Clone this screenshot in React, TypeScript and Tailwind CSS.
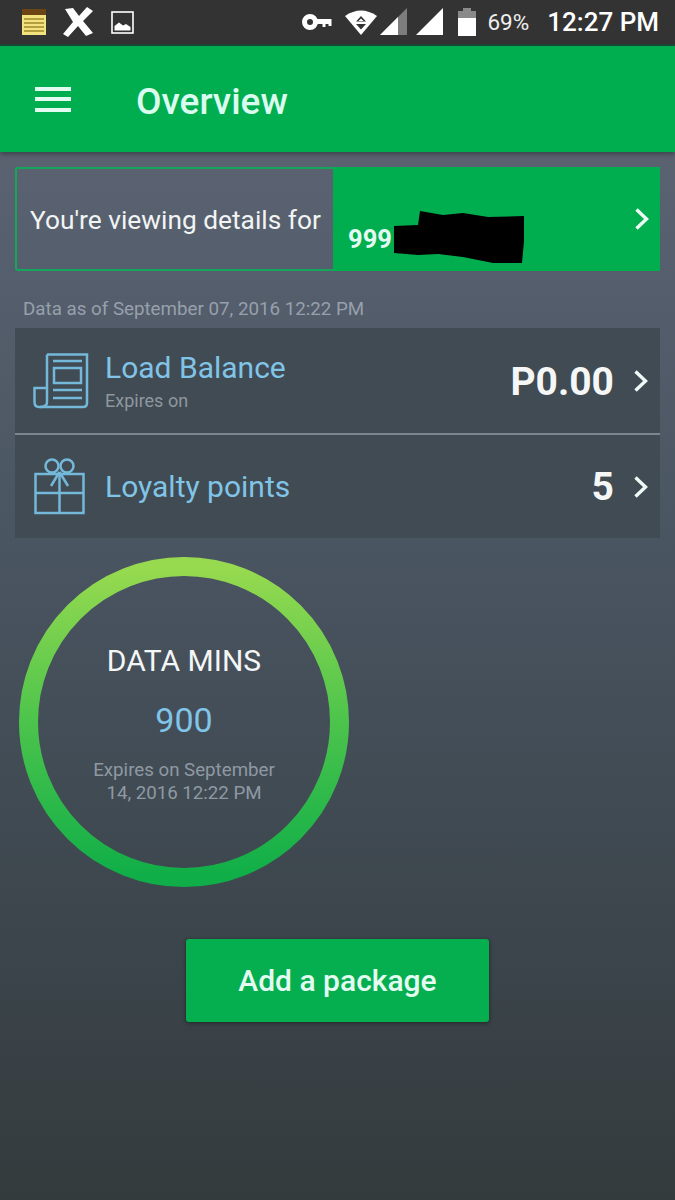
import React from "react";

function Chevron() {
  return (
    <svg width="16" height="24" viewBox="0 0 16 24" className="shrink-0">
      <path d="M2.5 2.5 L12.5 12 L2.5 21.5" fill="none" stroke="#eefaf5" strokeWidth="3.4" />
    </svg>
  );
}

function StatusLeft() {
  return (
    <div className="flex items-center">
      <svg width="26" height="28" viewBox="0 0 26 28" className="ml-[21px]">
        <rect x="1" y="1" width="24" height="26" fill="#f3e27e" />
        <rect x="1" y="1" width="24" height="6" fill="#6d4414" />
        <path d="M3 11h20M3 15h20M3 19h20M3 23h20" stroke="#a08a2c" strokeWidth="1.6" />
      </svg>
      <svg width="32" height="32" viewBox="0 0 32 32" className="ml-[15px]">
        <path d="M3 3 L11 2 L17 10 L25 1 L31 5 L21 15 L31 27 L24 30 L16 20 L6 31 L1 28 L11 16 Z" fill="#fff" />
      </svg>
      <svg width="23" height="23" viewBox="0 0 23 23" className="ml-[17px]">
        <rect x="1" y="1" width="21" height="21" fill="none" stroke="#fff" strokeWidth="1.6" />
        <path d="M3.5 19.5 V15 L8 11.5 L12 14.5 L15 13 L19.5 16 V19.5 Z" fill="#fff" />
      </svg>
    </div>
  );
}

function StatusRight() {
  return (
    <div className="flex items-center">
      <svg width="30" height="18" viewBox="0 0 30 18">
        <circle cx="8" cy="9" r="5.5" fill="none" stroke="#fff" strokeWidth="5" />
        <path d="M13 6 H29.5 V13 H26.5 V11 H23.5 V14 H20.5 V11 H13 Z" fill="#fff" />
      </svg>
      <svg width="34" height="28" viewBox="0 0 34 28" className="ml-[12px]">
        <path d="M1 8 Q17 -3 33 8 L17 27 Z" fill="#fff" />
        <path d="M17 8 L22 13.5 H12 Z M12 16 H22 L17 21.5 Z" fill="#333" />
        <path d="M17 10.5 L19.5 13 H14.5 Z" fill="#fff" />
      </svg>
      <svg width="28" height="28" viewBox="0 0 28 28" className="ml-[2px]">
        <path d="M0 27 L27 0 V27 Z" fill="#7d7d7d" />
        <path d="M0 27 L18 9 V27 Z" fill="#fff" />
      </svg>
      <svg width="28" height="28" viewBox="0 0 28 28" className="ml-[8px]">
        <path d="M0 27 L27 0 V27 Z" fill="#fff" />
      </svg>
      <svg width="18" height="28" viewBox="0 0 18 28" className="ml-[14px]">
        <rect x="5" y="0" width="8" height="3" fill="#8a8a8a" />
        <rect x="0" y="3" width="18" height="7" fill="#8a8a8a" />
        <rect x="0" y="10" width="18" height="18" fill="#fff" />
      </svg>
      <span className="ml-[11px] text-[22.5px] leading-none text-[#eeeeee]">69%</span>
      <span className="ml-[18px] mr-[16px] text-[26px] font-medium leading-none text-white">12:27 PM</span>
    </div>
  );
}

function PaperIcon() {
  return (
    <svg width="56" height="56" viewBox="0 0 56 56" fill="none" stroke="#74b8da" strokeWidth="2.5" className="shrink-0">
      <path d="M14 1.5 H54 V50 Q54 54 50 54 H6 Q1.5 54 1.5 49 V35 H14" />
      <path d="M14 1.5 V49 Q14 54 7 54" />
      <path d="M20 8 H49 M20 45 H49 M20 37 H49" />
      <rect x="21" y="15" width="27" height="15" />
    </svg>
  );
}

function GiftIcon() {
  return (
    <svg width="52" height="58" viewBox="0 0 52 58" fill="none" stroke="#74b8da" strokeWidth="2.5" className="shrink-0">
      <rect x="1.5" y="16" width="48" height="39" />
      <path d="M1.5 35 H49.5 M25.5 16 V55" />
      <circle cx="18" cy="8" r="6.5" />
      <circle cx="33" cy="8" r="6.5" />
      <path d="M25.5 14 L17 28 M25.5 14 L34 28" />
    </svg>
  );
}

export default function App() {
  const roboto = { fontFamily: "Roboto, 'Noto Sans', sans-serif" };
  return (
    <div
      style={roboto}
      className="flex h-[1200px] w-[675px] flex-col overflow-hidden bg-gradient-to-b from-[#616877] via-[#4a5562] via-45% to-[#333b3d]"
    >
      <div className="flex h-[44px] shrink-0 items-center justify-between bg-[#333333]">
        <StatusLeft />
        <StatusRight />
      </div>
      <div className="h-[2px] shrink-0 bg-[#1c4a38]" />
      <div className="flex h-[106px] shrink-0 items-center bg-[#00ae4f] shadow-[0_2px_5px_rgba(0,0,0,0.35)]">
        <div className="ml-[35px] flex w-[36px] flex-col gap-[6.5px]">
          <div className="h-[4px] bg-[#e4fbf2]" />
          <div className="h-[4px] bg-[#e4fbf2]" />
          <div className="h-[4px] bg-[#e4fbf2]" />
        </div>
        <div className="ml-[65px] mt-[5px] text-[37px] font-medium leading-none text-[#dcfbf0]">Overview</div>
      </div>

      <div className="flex flex-col px-[15px] pt-[15px]">
        <div className="flex h-[104px]">
          <div className="flex w-[318px] items-center rounded-l-[3px] border-2 border-r-0 border-[#14a65a] pl-[13px] pt-[2px]">
            <span className="whitespace-nowrap text-[26.3px] leading-none text-[#f2f4f4]">You're viewing details for</span>
          </div>
          <div className="flex flex-1 bg-[#00ae4f]">
            <div className="relative ml-[15px] mt-[57px] text-[25.5px] font-bold leading-[30px] text-[#e4fbf2]">
              999
              <svg width="132" height="54" viewBox="0 0 132 54" className="absolute left-[45px] top-[-13px]">
                <path d="M27 0 L50 4 L70 2 L95 6 L131 5 L131 30 L129 52 L100 52 L70 46 L45 43 L25 44 L1 42 L1 15 L25 14 Z" fill="#000" />
              </svg>
            </div>
            <div className="ml-auto mr-[10px] flex items-center">
              <Chevron />
            </div>
          </div>
        </div>

        <div className="ml-[8px] mt-[26px] text-[18.75px] leading-[24px] text-[#97a0ac]">
          Data as of September 07, 2016 12:22 PM
        </div>

        <div className="mt-[7px] flex flex-col bg-[#414b53]">
          <div className="flex h-[107px] items-center border-b-2 border-[#7c8590] pl-[18px] pr-[11px] pt-[1px]">
            <PaperIcon />
            <div className="ml-[16px] flex flex-col">
              <span className="text-[30px] leading-[34px] text-[#80c4e8]">Load Balance</span>
              <span className="mt-[6px] text-[18px] leading-[20px] text-[#8f979f]">Expires on</span>
            </div>
            <span className="ml-auto mt-[2px] text-[39px] font-bold leading-none text-[#f5f7f7]">P0.00</span>
            <div className="ml-[19px]">
              <Chevron />
            </div>
          </div>
          <div className="flex h-[103px] items-center pl-[19px] pr-[11px]">
            <GiftIcon />
            <span className="ml-[19px] mt-[1px] text-[30px] leading-[34px] text-[#80c4e8]">Loyalty points</span>
            <span className="ml-auto mt-[1px] text-[39px] font-bold leading-none text-[#f5f7f7]">5</span>
            <div className="ml-[19px]">
              <Chevron />
            </div>
          </div>
        </div>

        <div className="relative ml-[4px] mt-[19px] flex h-[330px] w-[330px] flex-col items-center">
          <svg width="330" height="330" viewBox="0 0 330 330" className="absolute left-0 top-0">
            <defs>
              <linearGradient id="ring" x1="0" y1="0" x2="0" y2="1">
                <stop offset="0" stopColor="#97da4f" />
                <stop offset="0.5" stopColor="#4cc44c" />
                <stop offset="1" stopColor="#0fae48" />
              </linearGradient>
            </defs>
            <circle cx="165" cy="165" r="155.5" fill="none" stroke="url(#ring)" strokeWidth="19" />
          </svg>
          <span className="mt-[87px] text-[30px] leading-[34px] text-[#f4f6f6]">DATA MINS</span>
          <span className="mt-[22px] text-[34px] leading-[40px] text-[#80c4e8]">900</span>
          <span className="mt-[19px] w-[200px] text-center text-[18.7px] leading-[23px] text-[#8f99a3]">
            Expires on September 14, 2016 12:22 PM
          </span>
        </div>

        <button className="ml-[171px] mt-[52px] h-[83px] w-[303px] rounded-[3px] bg-[#05ae4f] text-[30px] font-medium text-[#e4fbf2] shadow-[0_1px_4px_rgba(0,0,0,0.45)]">
          Add a package
        </button>
      </div>
    </div>
  );
}
